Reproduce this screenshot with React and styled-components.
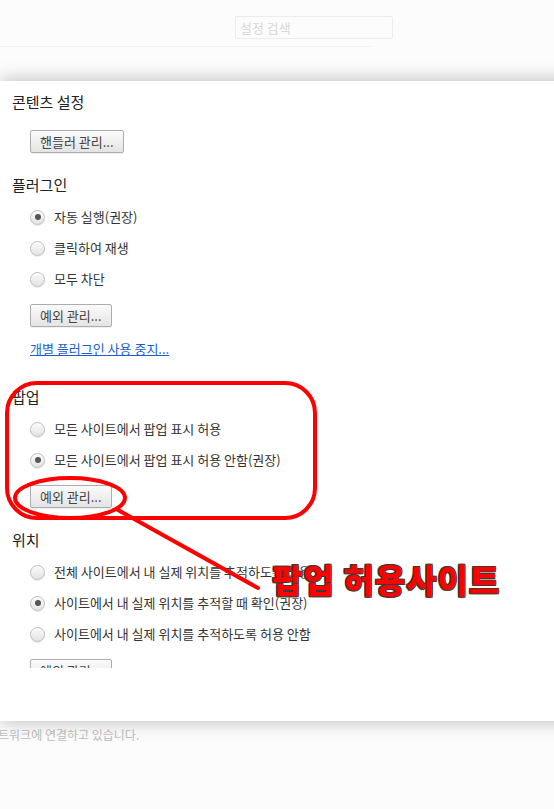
import React from 'react'
import styled, { createGlobalStyle } from 'styled-components';

const GlobalStyle = createGlobalStyle`
  html, body {
    margin: 0;
    padding: 0;
    background: #fcfcfc;
    overflow: hidden;
  }
  body {
    font-family: "Noto Sans CJK KR", "Noto Sans", sans-serif;
  }
`;

const Page = styled.div`
  position: relative;
  width: 554px;
  height: 809px;
  overflow: hidden;
`;

const Header = styled.div`
  width: 372px;
  height: 47px;
  box-sizing: border-box;
  padding: 16px 0 0 235px;
  border-bottom: 1px solid #f2f2f2;
`;

const Search = styled.div`
  width: 158px;
  height: 23px;
  box-sizing: border-box;
  border: 1px solid #ececec;
  border-radius: 2px;
  padding: 0 4px;
  font-size: 13px;
  line-height: 21px;
  color: #d8d8d8;
`;

const Dialog = styled.div`
  position: relative;
  margin-top: 34px;
  width: 600px;
  height: 640px;
  background: #fff;
  box-shadow: 0 0 18px rgba(0, 0, 0, 0.28);
  z-index: 1;
`;

const Scroll = styled.div`
  height: 587px;
  overflow: hidden;
  box-sizing: border-box;
  padding: 12px 0 0 12px;
  display: flex;
  flex-direction: column;
  gap: 23px;
`;

const Section = styled.section`
  display: flex;
  flex-direction: column;
`;

const Heading = styled.h3`
  margin: 0;
  font-size: 15px;
  font-weight: 400;
  line-height: 18px;
  height: 18px;
  color: #222;
`;

const Body = styled.div`
  display: flex;
  flex-direction: column;
  gap: 11px;
  padding: 13px 0 0 18px;
`;

const Row = styled.label`
  display: flex;
  align-items: center;
  height: 20px;
  gap: 9px;
  font-size: 13px;
  line-height: 20px;
  color: #333;
`;

const Radio = styled.span`
  flex: none;
  width: 15px;
  height: 15px;
  box-sizing: border-box;
  border-radius: 50%;
  border: 1px solid #bdbdbd;
  background: linear-gradient(#fafafa, #e4e4e4);
  box-shadow: inset 0 1px 1px rgba(255, 255, 255, 0.8), 0 1px 1px rgba(0, 0, 0, 0.08);
  display: flex;
  align-items: center;
  justify-content: center;
  &::after {
    content: '';
    width: 6px;
    height: 6px;
    border-radius: 50%;
    background: #555;
    display: ${({ $checked }) => ($checked ? 'block' : 'none')};
  }
`;

const ButtonWrap = styled.div`
  margin-top: 4px;
  &:first-child {
    margin-top: 6px;
  }
`;

const Button = styled.button`
  display: block;
  height: 23px;
  padding: 0 9px;
  border: 1px solid #adadad;
  border-radius: 2px;
  background: linear-gradient(#fbfbfb, #e4e4e4);
  box-shadow: 0 1px 0 rgba(0, 0, 0, 0.06);
  font-family: inherit;
  font-size: 13px;
  color: #444;
  line-height: 19px;
`;

const Link = styled.a`
  display: block;
  font-size: 13px;
  line-height: 18px;
  height: 18px;
  margin-top: 2px;
  margin-bottom: 7px;
  color: #1a5fd0;
  text-decoration: underline;
`;

const Status = styled.div`
  margin: 5px 0 0 -13px;
  font-size: 12px;
  color: #bdbdbd;
  white-space: nowrap;
`;

const Marks = styled.svg`
  position: absolute;
  left: 0;
  top: 0;
  z-index: 2;
  pointer-events: none;
`;

const Callout = styled.div`
  position: absolute;
  left: 272px;
  top: 559px;
  z-index: 3;
  font-size: 33px;
  line-height: 40px;
  font-weight: 900;
  color: #ff0000;
  white-space: nowrap;
  letter-spacing: 1px;
  text-shadow:
    1px 1px 0 #3a3a3a, -1px -1px 0 #3a3a3a, 1px -1px 0 #3a3a3a, -1px 1px 0 #3a3a3a,
    0 0 4px #fffbd0;
`;

const sections = [
  { title: '콘텐츠 설정', button: '핸들러 관리...' },
  {
    title: '플러그인',
    options: ['자동 실행(권장)', '클릭하여 재생', '모두 차단'],
    checked: 0,
    button: '예외 관리...',
    link: '개별 플러그인 사용 중지...',
  },
  {
    title: '팝업',
    options: ['모든 사이트에서 팝업 표시 허용', '모든 사이트에서 팝업 표시 허용 안함(권장)'],
    checked: 1,
    button: '예외 관리...',
  },
  {
    title: '위치',
    options: [
      '전체 사이트에서 내 실제 위치를 추적하도록 허용',
      '사이트에서 내 실제 위치를 추적할 때 확인(권장)',
      '사이트에서 내 실제 위치를 추적하도록 허용 안함',
    ],
    checked: 1,
    button: '예외 관리...',
  },
];

export default function App() {
  return (
    <Page>
      <GlobalStyle />
      <Header>
        <Search>설정 검색</Search>
      </Header>

      <Dialog>
        <Scroll>
          {sections.map((s) => (
            <Section key={s.title}>
              <Heading>{s.title}</Heading>
              <Body>
                {s.options?.map((o, i) => (
                  <Row key={o}>
                    <Radio $checked={i === s.checked} />
                    {o}
                  </Row>
                ))}
                <ButtonWrap>
                  <Button>{s.button}</Button>
                </ButtonWrap>
                {s.link && <Link href="#">{s.link}</Link>}
              </Body>
            </Section>
          ))}
        </Scroll>
      </Dialog>

      <Status>네트워크에 연결하고 있습니다.</Status>

      {/* 빨간 표시 */}
      <Marks width="554" height="809" viewBox="0 0 554 809">
        <g fill="none" stroke="#ff0000" strokeWidth="4" strokeLinecap="round">
          <rect x="7" y="383" width="308" height="135" rx="30" />
          <ellipse cx="70" cy="498" rx="55" ry="20" />
          <line x1="118" y1="510" x2="258" y2="588" />
        </g>
      </Marks>
      <Callout>팝업 허용사이트</Callout>
    </Page>
  )
}
